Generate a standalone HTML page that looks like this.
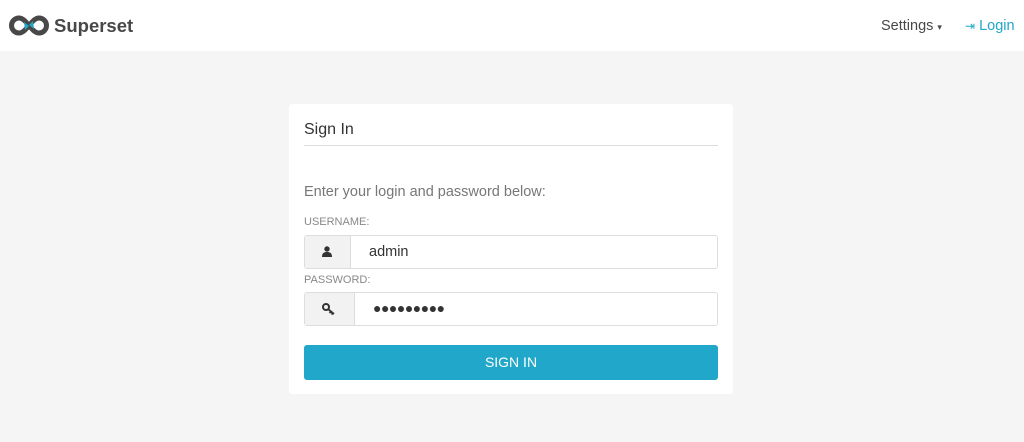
<!DOCTYPE html>
<html><head><style>
*{box-sizing:border-box;margin:0;padding:0}
body{width:1024px;height:442px;background:#f5f5f5;font-family:"Liberation Sans",sans-serif;position:relative;overflow:hidden}
.nav{position:absolute;left:0;top:0;width:1024px;height:51px;background:#fff}
.brand{position:absolute;left:54px;top:15px;font-size:18.5px;font-weight:bold;color:#484848}
.set{position:absolute;left:881px;top:18px;font-size:14.5px;color:#484848}
.login{position:absolute;left:965px;top:18px;font-size:14.5px;color:#20a7c9}
.card{position:absolute;left:289px;top:104px;width:444px;height:290px;background:#fff;border-radius:3px}
.t{position:absolute;left:15px;top:17px;font-size:16px;color:#333}
.hr{position:absolute;left:15px;top:41px;width:414px;height:1px;background:#ddd}
.p{position:absolute;left:15px;top:80px;font-size:14.5px;color:#777}
.l{position:absolute;left:15px;font-size:11px;color:#888}
.in{position:absolute;left:15px;width:414px;height:34px;border:1px solid #ddd;border-radius:3px;background:#fff}
.ad{position:absolute;left:0;top:0;height:32px;background:#f2f2f2;border-right:1px solid #ddd}
.v{position:absolute;top:8px;font-size:14.5px;color:#333}
.btn{position:absolute;left:15px;top:241px;width:414px;height:35px;background:#20a7c9;border-radius:3px;color:#fff;font-size:14px;text-align:center;line-height:35px}
</style></head><body>
<div class="nav">
<svg style="position:absolute;left:8px;top:15px" width="42" height="21" viewBox="0 0 42 21"><path d="M11 3a7.5 7.5 0 1 0 0 15c4 0 6.5-3.5 10-7.5C24.5 6.5 27 3 31 3a7.5 7.5 0 1 1 0 15c-4 0-6.5-3.5-10-7.5C17.5 6.5 15 3 11 3z" fill="none" stroke="#484848" stroke-width="5"/><path d="M16 7l5 4-4 4z M26 14l-5-4 4-4z" fill="#20a7c9"/></svg>
<div class="brand">Superset</div>
<div class="set">Settings <span style="font-size:9px">▾</span></div>
<div class="login"><span style="font-size:12px">⇥</span> Login</div>
</div>
<div class="card">
<div class="t">Sign In</div><div class="hr"></div>
<div class="p">Enter your login and password below:</div>
<div class="l" style="top:112px">USERNAME:</div>
<div class="in" style="top:131px"><div class="ad" style="width:46px"><svg style="position:absolute;left:17px;top:10px" width="10" height="11" viewBox="0 0 10 11"><circle cx="5" cy="3" r="2.7" fill="#333"/><path d="M0 11c0-4 2-5 5-5s5 1 5 5z" fill="#333"/></svg></div><div class="v" style="left:64px">admin</div></div>
<div class="l" style="top:170px">PASSWORD:</div>
<div class="in" style="top:188px"><div class="ad" style="width:50px"><svg style="position:absolute;left:17px;top:10px" width="14" height="12" viewBox="0 0 14 12"><circle cx="4" cy="4" r="3" fill="none" stroke="#333" stroke-width="2"/><path d="M6 6l6 5M9 8.5l-1.5 1.5M11 10l-1.5 1.5" stroke="#333" stroke-width="1.8"/></svg></div><div class="v" style="left:68px;font-size:14px;letter-spacing:-0.5px;top:7px">●●●●●●●●●</div></div>
<div class="btn">SIGN IN</div>
</div>
</body></html>
